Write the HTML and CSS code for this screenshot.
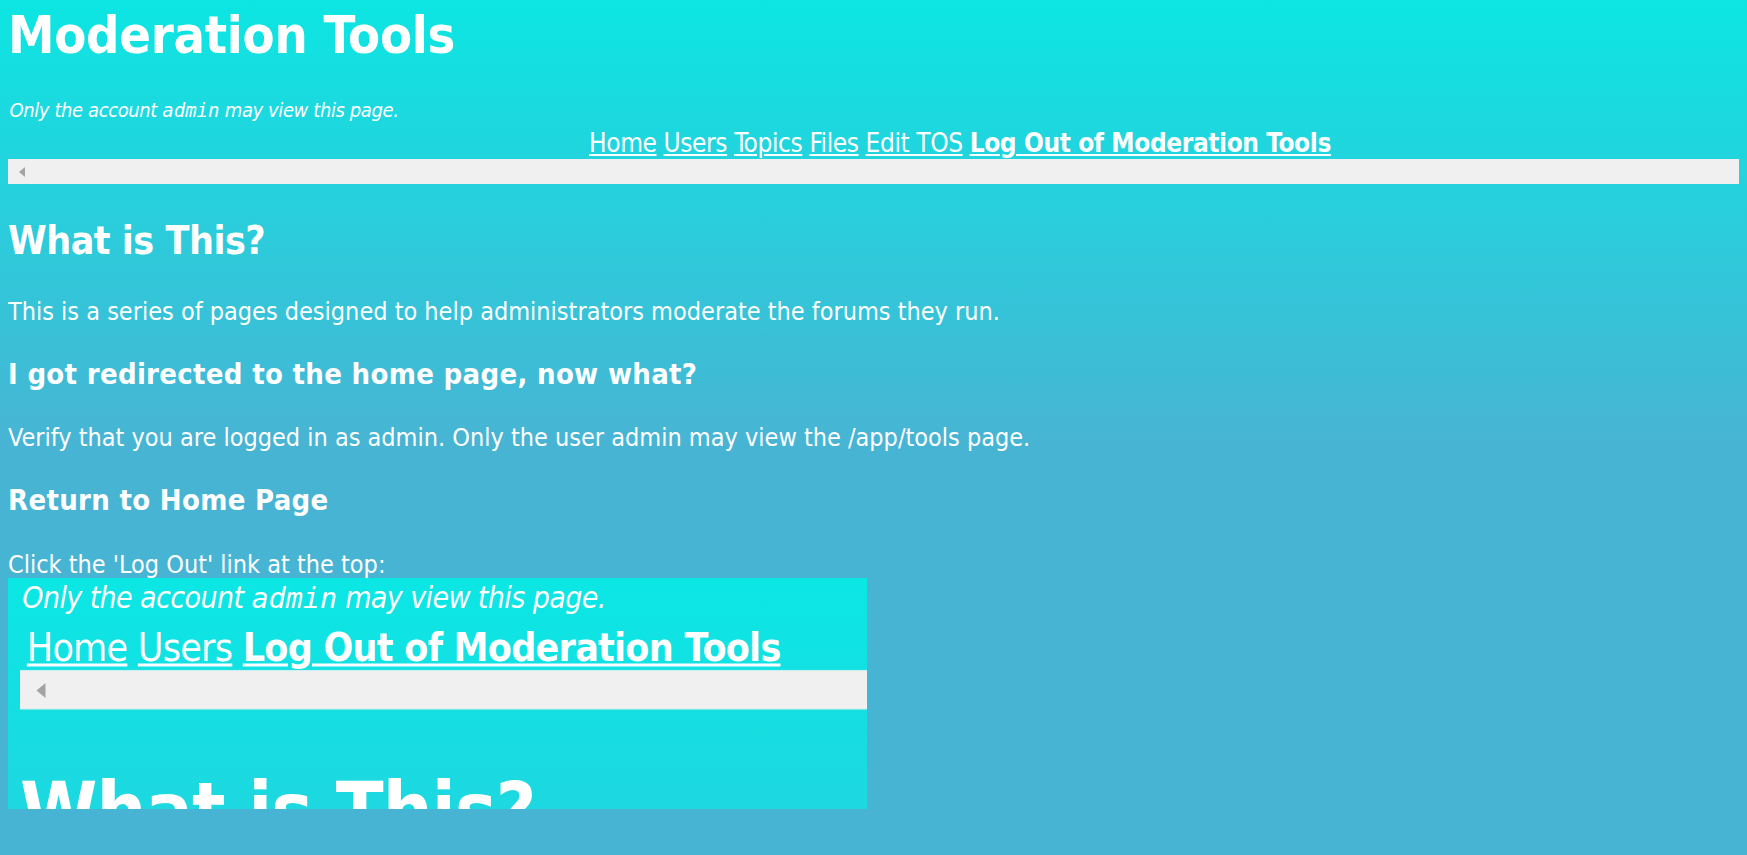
FILE: index.html
```html
<!DOCTYPE html>
<html lang="en">
<head>
<meta charset="utf-8">
<title>Moderation Tools</title>
<link rel="stylesheet" href="styles.css">
</head>
<body>
<h1 class="title">Moderation Tools</h1>
<p class="notice"><em>Only the account <code>admin</code> may view this page.</em></p>
<div class="scroller">
  <nav class="nav"><a href="#">Home</a> <a href="#">Users</a> <a href="#">Topics</a> <a href="#">Files</a> <a href="#">Edit TOS</a> <a href="#" class="logout">Log Out of Moderation Tools</a></nav>
  <div class="hbar"><span class="arrow"></span></div>
</div>
<h2 class="section">What is This?</h2>
<p class="text">This is a series of pages designed to help administrators moderate the forums they run.</p>
<h3 class="sub">I got redirected to the home page, now what?</h3>
<p class="text">Verify that you are logged in as admin. Only the user admin may view the /app/tools page.</p>
<h3 class="sub">Return to Home Page</h3>
<p class="text last">Click the 'Log Out' link at the top:</p>
<div class="shot" role="img" aria-label="Screenshot of the top of the Moderation Tools page">
  <div class="shot-inner">
    <p class="notice shot-notice"><em>Only the account <code>admin</code> may view this page.</em></p>
    <nav class="shot-nav"><a href="#">Home</a> <a href="#">Users</a> <a href="#" class="logout">Log Out of Moderation Tools</a></nav>
    <div class="hbar shot-bar"><span class="arrow"></span></div>
    <h1 class="shot-title">What is This?</h1>
  </div>
</div>
</body>
</html>
```

FILE: styles.css
```css
html {
  min-height: 100%;
  background: #48b4d4 linear-gradient(180deg, #0ce6e3 0px, #48b4d4 445px) no-repeat;
}
body {
  margin: 8px;
  color: #fff;
  font-family: "DejaVu Sans Condensed", "DejaVu Sans", sans-serif;
  font-size: 25px;
}
a { color: #fff; text-decoration: underline; }
.title {
  margin: 0;
  font-size: 52px;
  line-height: 54px;
  letter-spacing: -0.3px;
  font-weight: bold;
}
.notice {
  margin: 36px 0 0;
  padding-left: 1.5px;
  font-size: 20px;
  line-height: 24px;
  letter-spacing: -0.4px;
}
.notice code {
  font-family: "DejaVu Sans Mono", monospace;
  font-size: 0.95em;
  font-style: italic;
  letter-spacing: 0;
}
.scroller {
  margin: 6px -8px 0 0;
  overflow: hidden;
}
.nav {
  width: 1904px;
  text-align: center;
  font-size: 26px;
  line-height: 30px;
  letter-spacing: -0.4px;
}
.logout { font-weight: bold; }
.hbar {
  margin-top: 1px;
  height: 25px;
  background: #f0f0f0;
  display: flex;
  align-items: center;
  padding-left: 11px;
}
.arrow {
  width: 0;
  height: 0;
  border-right: 6px solid #a3a3a3;
  border-top: 5px solid transparent;
  border-bottom: 5px solid transparent;
}
.section {
  margin: 33.5px 0 0;
  font-size: 39px;
  line-height: 46px;
  letter-spacing: -0.5px;
}
.text {
  margin: 34px 0 0;
  font-size: 25px;
  line-height: 28px;
}
.text.last {
  margin-top: 35px;
  line-height: 27px;
}
.sub {
  margin: 32.3px 0 0;
  font-size: 29px;
  line-height: 32px;
  letter-spacing: 0.3px;
}
.shot {
  width: 859px;
  height: 231px;
  overflow: hidden;
  background: linear-gradient(180deg, #0be7e4, #1dd8e0);
}
.shot-inner {
  width: 565px;
  padding: 1px 0 0 8px;
  transform: scale(1.5);
  transform-origin: 0 0;
}
.shot-notice { margin: 0; }
.shot-nav {
  margin-top: 6px;
  padding-left: 4.5px;
  font-size: 26px;
  line-height: 30px;
  letter-spacing: -0.5px;
  white-space: nowrap;
}
.shot-bar {
  margin-right: -60px;
  box-shadow: 0 -0.7px 0 #c8eeee, 0 0.7px 0 #c8eeee;
}
.shot-title {
  margin: 37.6px 0 0;
  font-size: 52px;
  line-height: 60px;
  letter-spacing: -0.6px;
  white-space: nowrap;
}
```
